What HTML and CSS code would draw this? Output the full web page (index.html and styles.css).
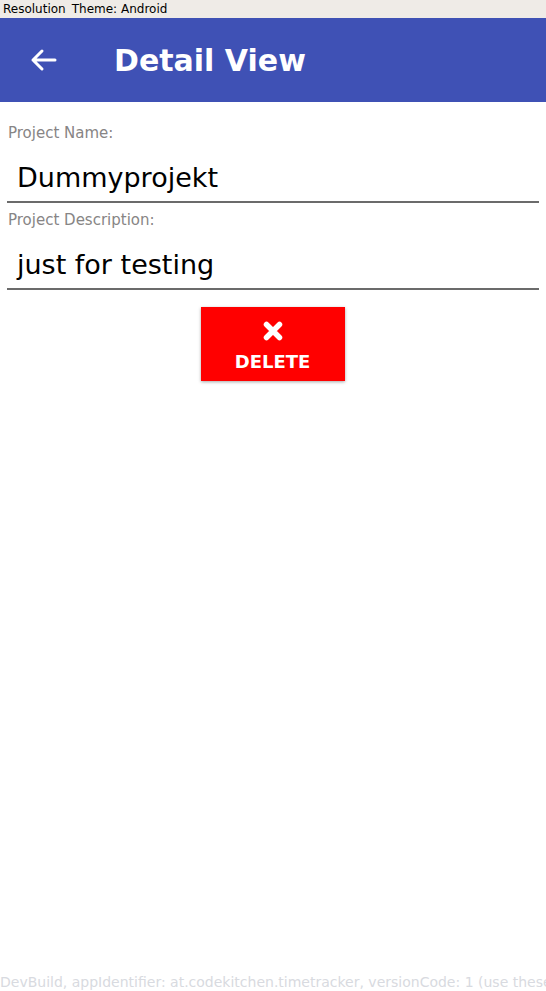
FILE: index.html
```html
<!DOCTYPE html>
<html>
<head>
<meta charset="utf-8">
<link rel="stylesheet" href="styles.css">
</head>
<body>
<div class="menubar"><span>Resolution</span><span>Theme: Android</span></div>
<div class="appbar">
  <svg class="back" width="28" height="24" viewBox="0 0 28 24"><path d="M26 12H4M13 3L4 12L13 21" fill="none" stroke="#fff" stroke-width="3" stroke-linecap="round" stroke-linejoin="round"/></svg>
  <div class="title">Detail View</div>
</div>
<div class="content">
  <div class="field">
    <div class="label">Project Name:</div>
    <div class="value">Dummyprojekt</div>
  </div>
  <div class="field">
    <div class="label">Project Description:</div>
    <div class="value">just for testing</div>
  </div>
  <div class="actions">
    <button class="delete">
      <svg width="22" height="22" viewBox="0 0 22 22"><path d="M4.5 4.5L17.5 17.5M17.5 4.5L4.5 17.5" stroke="#fff" stroke-width="5.5" stroke-linecap="round"/></svg>
      <span>DELETE</span>
    </button>
  </div>
</div>
<div class="footer">DevBuild, appIdentifier: at.codekitchen.timetracker, versionCode: 1 (use these</div>
</body>
</html>
```
FILE: styles.css
```css
html, body { margin: 0; padding: 0; }
body {
  width: 546px;
  height: 991px;
  position: relative;
  overflow: hidden;
  background: #fff;
  font-family: "DejaVu Sans", sans-serif;
}
.menubar {
  height: 18px;
  background: #efebe7;
  display: flex;
  gap: 6px;
  align-items: center;
  padding-left: 3px;
  font-size: 12px;
  color: #000;
}
.appbar {
  height: 84px;
  background: #3f51b5;
  display: flex;
  align-items: center;
}
.back { margin-left: 29px; }
.title {
  margin-left: 57px;
  color: #fff;
  font-weight: bold;
  font-size: 30px;
}
.content { padding: 0 7px; }
.field { display: flex; flex-direction: column; }
.label {
  font-size: 15px;
  color: #878585;
  padding-left: 1px;
  margin-top: 21px;
  line-height: 20px;
}
.field + .field .label { margin-top: 7px; }
.value {
  font-size: 27px;
  color: #000;
  padding-left: 10px;
  padding-top: 10px;
  height: 60px;
  line-height: 50px;
  border-bottom: 2px solid #6b6b6b;
  box-sizing: border-box;
}
.actions { display: flex; justify-content: center; margin-top: 17px; padding-right: 1px; }
.delete {
  width: 144px;
  height: 74px;
  background: #ff0000;
  border: none;
  box-shadow: 0 1px 3px rgba(0,0,0,0.35);
  display: flex;
  flex-direction: column;
  align-items: center;
  justify-content: flex-start;
  padding: 13px 0 0 0;
  gap: 10px;
  color: #fff;
  font-family: "DejaVu Sans", sans-serif;
  font-weight: bold;
  font-size: 18px;
  line-height: 20px;
}
.footer {
  position: absolute;
  left: 0;
  bottom: 0;
  white-space: nowrap;
  font-size: 14px;
  color: #d8dae0;
  line-height: 18px;
}
```
